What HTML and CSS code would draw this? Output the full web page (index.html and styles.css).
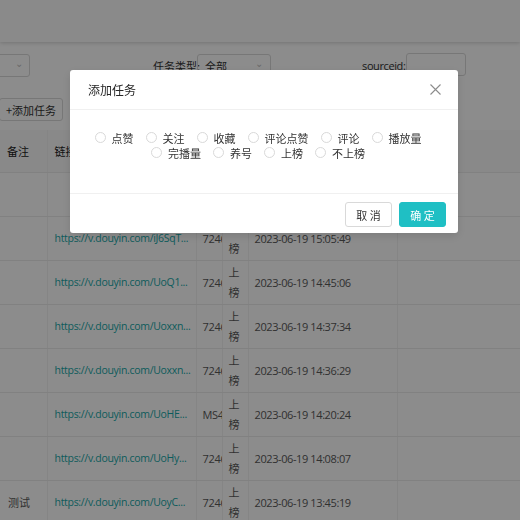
FILE: index.html
```html
<!DOCTYPE html>
<html lang="zh-CN">
<head>
    <meta charset="UTF-8">
    <meta name="viewport" content="width=device-width, initial-scale=1.0">
    <title>任务列表</title>
    <link rel="stylesheet" href="styles.css">
</head>
<body>
    <div class="topbar"></div>

    <div class="filters">
        <div class="select select-first"><span class="arrow">&#8964;</span></div>
        <label class="filter-label type-label">任务类型:</label>
        <div class="select select-type"><span class="value">全部</span><span class="arrow">&#8964;</span></div>
        <label class="filter-label source-label">sourceid:</label>
        <div class="input-box"></div>
    </div>

    <div class="toolbar">
        <button class="btn-add">+添加任务</button>
    </div>

    <table class="task-table">
        <colgroup>
            <col style="width:47px">
            <col style="width:149px">
            <col style="width:26px">
            <col style="width:26px">
            <col style="width:149px">
            <col style="width:200px">
        </colgroup>
        <tr>
            <th>备注</th>
            <th>链接</th>
            <th>ID</th>
            <th>类型</th>
            <th>创建时间</th>
            <th></th>
        </tr>
        <tr>
            <td></td>
            <td></td>
            <td class="clip">7246</td>
            <td class="state">上榜</td>
            <td class="time">2023-06-19 15:10:02</td>
            <td></td>
        </tr>
        <tr>
            <td></td>
            <td class="link"><a href="#">https://v.douyin.com/iJ6SqT...</a></td>
            <td class="clip">7246</td>
            <td class="state">上榜</td>
            <td class="time">2023-06-19 15:05:49</td>
            <td></td>
        </tr>
        <tr>
            <td></td>
            <td class="link"><a href="#">https://v.douyin.com/UoQ1...</a></td>
            <td class="clip">7246</td>
            <td class="state">上榜</td>
            <td class="time">2023-06-19 14:45:06</td>
            <td></td>
        </tr>
        <tr>
            <td></td>
            <td class="link"><a href="#">https://v.douyin.com/Uoxxn...</a></td>
            <td class="clip">7246</td>
            <td class="state">上榜</td>
            <td class="time">2023-06-19 14:37:34</td>
            <td></td>
        </tr>
        <tr>
            <td></td>
            <td class="link"><a href="#">https://v.douyin.com/Uoxxn...</a></td>
            <td class="clip">7246</td>
            <td class="state">上榜</td>
            <td class="time">2023-06-19 14:36:29</td>
            <td></td>
        </tr>
        <tr>
            <td></td>
            <td class="link"><a href="#">https://v.douyin.com/UoHE...</a></td>
            <td class="clip">MS4w</td>
            <td class="state">上榜</td>
            <td class="time">2023-06-19 14:20:24</td>
            <td></td>
        </tr>
        <tr>
            <td></td>
            <td class="link"><a href="#">https://v.douyin.com/UoHy...</a></td>
            <td class="clip">7246</td>
            <td class="state">上榜</td>
            <td class="time">2023-06-19 14:08:07</td>
            <td></td>
        </tr>
        <tr>
            <td>测试</td>
            <td class="link"><a href="#">https://v.douyin.com/UoyC...</a></td>
            <td class="clip">7246</td>
            <td class="state">上榜</td>
            <td class="time">2023-06-19 13:45:19</td>
            <td></td>
        </tr>
    </table>

    <!-- modal -->
    <div class="mask">
        <div class="modal">
            <div class="modal-header">
                <span class="modal-title">添加任务</span>
                <svg class="modal-close" width="11" height="11" viewBox="0 0 11 11">
                    <path d="M0.5 0.5 L10.5 10.5 M10.5 0.5 L0.5 10.5" stroke="#8c8c8c" stroke-width="1.1" fill="none"/>
                </svg>
            </div>
            <div class="modal-body">
                <div class="radio-group">
                    <label class="radio"><span class="radio-dot"></span>点赞</label>
                    <label class="radio"><span class="radio-dot"></span>关注</label>
                    <label class="radio"><span class="radio-dot"></span>收藏</label>
                    <label class="radio"><span class="radio-dot"></span>评论点赞</label>
                    <label class="radio"><span class="radio-dot"></span>评论</label>
                    <label class="radio"><span class="radio-dot"></span>播放量</label>
                    <label class="radio"><span class="radio-dot"></span>完播量</label>
                    <label class="radio"><span class="radio-dot"></span>养号</label>
                    <label class="radio"><span class="radio-dot"></span>上榜</label>
                    <label class="radio"><span class="radio-dot"></span>不上榜</label>
                </div>
            </div>
            <div class="modal-footer">
                <button class="btn btn-cancel">取 消</button>
                <button class="btn btn-ok">确 定</button>
            </div>
        </div>
    </div>
</body>
</html>
```

FILE: styles.css
```css
body {
    margin: 0;
    width: 520px;
    height: 520px;
    overflow: hidden;
    background-color: #fff;
    font-family: "Open Sans", "Noto Sans CJK SC", sans-serif;
    font-size: 11px;
    color: #595959;
}
.topbar {
    height: 42px;
    background-color: #fcfcfc;
    box-shadow: 0 1px 4px rgba(0,0,0,0.18);
}
.filters {
    display: flex;
    align-items: center;
    height: 23px;
    margin-top: 12px;
}
.select {
    display: flex;
    align-items: center;
    justify-content: space-between;
    box-sizing: border-box;
    height: 23px;
    border: 1px solid #d9d9d9;
    border-radius: 3px;
    padding: 0 7px;
}
.select .arrow {
    font-size: 10px;
    color: #bfbfbf;
    line-height: 10px;
    margin-top: -6px;
}
.select-first {
    width: 41px;
    margin-left: -11px;
    justify-content: flex-end;
    padding-right: 6px;
}
.filter-label {
    color: #333;
}
.type-label {
    margin-left: 123px;
    font-family: "Noto Sans CJK SC", sans-serif;
}
.select-type {
    width: 74px;
    margin-left: -3px;
}
.select-type .value {
    font-family: "Noto Sans CJK SC", sans-serif;
    color: #333;
}
.source-label {
    margin-left: 91px;
    letter-spacing: -0.4px;
}
.input-box {
    width: 60px;
    height: 23px;
    box-sizing: border-box;
    border: 1px solid #d9d9d9;
    border-radius: 3px;
    margin-left: 1px;
    margin-top: -2px;
}
.toolbar {
    margin-top: 21px;
    height: 23px;
}
.btn-add {
    height: 23px;
    margin-left: -1px;
    padding: 0 6px;
    background: #fff;
    border: 1px solid #d9d9d9;
    border-radius: 3px;
    font-family: "Noto Sans CJK SC", sans-serif;
    font-size: 11px;
    color: #333;
}
.task-table {
    margin-top: 9px;
    border-collapse: collapse;
    table-layout: fixed;
    width: 597px;
}
.task-table th,
.task-table td {
    height: 44px;
    padding: 0 7px;
    box-sizing: border-box;
    text-align: left;
    border-bottom: 1px solid #ececec;
    border-right: 1px solid #f2f2f2;
    white-space: nowrap;
    overflow: hidden;
}
.task-table th {
    background-color: #fafafa;
    font-family: "Noto Sans CJK SC", sans-serif;
    font-weight: normal;
    color: #222;
    height: 42px;
}
.task-table td:first-child {
    font-family: "Noto Sans CJK SC", sans-serif;
    padding-left: 8px;
}
.task-table .link {
    font-size: 10.5px;
    letter-spacing: -0.3px;
}
.task-table a {
    color: #18a8a8;
    text-decoration: none;
}
.task-table .clip {
    padding: 0 0 0 6px;
    text-overflow: clip;
    letter-spacing: -0.3px;
}
.task-table .state {
    white-space: normal;
    padding: 0 6px;
    line-height: 20px;
    font-family: "Noto Sans CJK SC", sans-serif;
}
.task-table .time {
    padding-left: 6px;
    letter-spacing: -0.4px;
}

/* modal */
.mask {
    position: fixed;
    top: 0;
    left: 0;
    right: 0;
    bottom: 0;
    background-color: rgba(0,0,0,0.45);
    padding: 70px 0 0 70px;
    box-sizing: border-box;
}
.modal {
    width: 388px;
    background-color: #fff;
    border-radius: 3px;
    box-shadow: 0 3px 10px rgba(0,0,0,0.12);
    font-family: "Noto Sans CJK SC", sans-serif;
}
.modal-header {
    display: flex;
    align-items: center;
    justify-content: space-between;
    height: 40px;
    box-sizing: border-box;
    padding: 0 17px 0 18px;
    border-bottom: 1px solid #f0f0f0;
}
.modal-title {
    font-size: 12px;
    color: #262626;
}
.modal-body {
    padding: 20px 18px 33px;
}
.radio-group {
    display: flex;
    flex-wrap: wrap;
    justify-content: center;
}
.radio {
    display: flex;
    align-items: center;
    height: 15px;
    margin-right: 12px;
    font-size: 11px;
    color: #333;
}
.radio-dot {
    width: 11px;
    height: 11px;
    box-sizing: border-box;
    border: 1px solid #d9d9d9;
    border-radius: 50%;
    margin-right: 6px;
}
.modal-footer {
    display: flex;
    justify-content: flex-end;
    gap: 7px;
    padding: 8px 12px 6px;
    border-top: 1px solid #f0f0f0;
}
.btn {
    height: 25px;
    width: 47px;
    border-radius: 3px;
    font-family: "Noto Sans CJK SC", sans-serif;
    font-size: 11px;
    padding: 0;
}
.btn-cancel {
    background: #fff;
    border: 1px solid #d9d9d9;
    color: #333;
}
.btn-ok {
    background: #1fbfc4;
    border: 1px solid #1fbfc4;
    color: #fff;
}
```
